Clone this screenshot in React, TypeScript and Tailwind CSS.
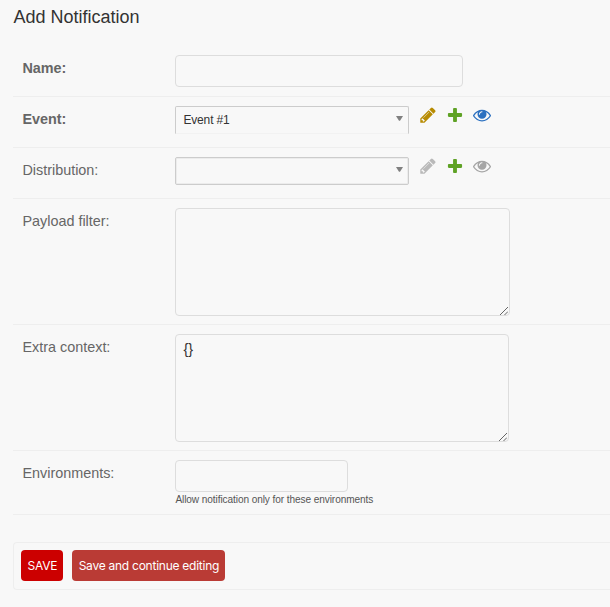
import type { ReactNode } from 'react';

const PENCIL =
  'M491 1536l91-91-235-235-91 91v107h128v128h107zm523-928q0-22-22-22-10 0-17 7l-542 542q-7 7-7 17 0 22 22 22 10 0 17-7l542-542q7-7 7-17zm-54-192l416 416-832 832h-416v-416zm683 96q0 53-37 90l-166 166-416-416 166-165q36-38 90-38 53 0 91 38l235 234q37 39 37 91z';
const PLUS =
  'M1600 796v192q0 40-28 68t-68 28h-416v416q0 40-28 68t-68 28h-192q-40 0-68-28t-28-68v-416h-416q-40 0-68-28t-28-68v-192q0-40 28-68t68-28h416v-416q0-40 28-68t68-28h192q40 0 68 28t28 68v416h416q40 0 68 28t28 68z';
const EYE =
  'M1664 960q-152-236-381-353 61 104 61 225 0 185-131.5 316.5t-316.5 131.5-316.5-131.5-131.5-316.5q0-121 61-225-229 117-381 353 133 205 333.5 326.5t434.5 121.5 434.5-121.5 333.5-326.5zm-720-384q0-20-14-34t-34-14q-125 0-214.5 89.5t-89.5 214.5q0 20 14 34t34 14 34-14 14-34q0-86 61-147t147-61q20 0 34-14t14-34zm848 384q0 34-20 69-140 230-376.5 368.5t-499.5 138.5-499.5-139-376.5-368q-20-35-20-69t20-69q140-229 376.5-368t499.5-139 499.5 139 376.5 368q20 35 20 69z';

function Icon({ d, className }: { d: string; className: string }) {
  return (
    <svg viewBox="0 0 1792 1792" className={`size-[18px] fill-current ${className}`}>
      <path d={d} />
    </svg>
  );
}

function Row({ label, bold, height, children }: { label: string; bold?: boolean; height: string; children: ReactNode }) {
  return (
    <div className={`flex items-start border-b border-[#eeeeee] pl-[9px] pt-[9px] ${height}`}>
      <div className={`w-[153px] shrink-0 pt-[3px] text-[14.4px] leading-[20px] text-[#666] ${bold ? 'font-bold' : ''}`}>{label}</div>
      {children}
    </div>
  );
}

function Select({ value, open }: { value: string; open?: boolean }) {
  return (
    <div
      className={`flex h-[28px] w-[234px] items-center justify-between border border-[#cccccc] px-[7px] text-[12px] tracking-[-0.15px] text-[#333] ${
        open ? 'rounded-t-[2px] border-b-[#f2f2f2]' : 'rounded-[2px] shadow-[inset_0_0_0_1px_#ececec]'
      }`}
    >
      <span>{value}</span>
      <svg viewBox="0 0 7 5" className="mb-[3px] -mr-[1.5px] h-[5px] w-[7px] fill-[#808080]">
        <path d="M0 0h7L4 4.8H3z" />
      </svg>
    </div>
  );
}

function Actions({ disabled }: { disabled?: boolean }) {
  return (
    <div className="ml-[9.6px] flex gap-[9px]">
      <Icon d={PENCIL} className={disabled ? 'text-[#b9b9b9]' : 'text-[#b78b02]'} />
      <Icon d={PLUS} className="text-[#5fa225]" />
      <Icon d={EYE} className={disabled ? 'text-[#a5a5a5]' : 'text-[#2b70c0]'} />
    </div>
  );
}

function TextArea({ className, value }: { className: string; value: string }) {
  return (
    <div className={`flex h-[108px] items-end justify-between rounded-[4px] border border-[#dddddd] ${className}`}>
      <span className="self-start pl-[7px] pt-[5px] text-[14.4px] leading-[18px] text-[#333]">{value}</span>
      <svg viewBox="0 0 8 8" className="mr-px size-[8px] stroke-[#666]" strokeWidth="1">
        <path d="M0 8L8 0M4.5 8L8 4.5" />
      </svg>
    </div>
  );
}

export default function App() {
  return (
    <div className="h-[607px] w-[610px] overflow-hidden bg-[#f8f8f8] pl-[13.4px] font-['Liberation_Sans',Arial,sans-serif]">
      <h1 className="h-[46px] pt-[7px] text-[18px] leading-[20px] text-[#333]">Add Notification</h1>
      <Row label="Name:" bold height="h-[51px]">
        <div className="h-[32px] w-[288px] rounded-[4px] border border-[#dddddd]" />
      </Row>
      <Row label="Event:" bold height="h-[51px]">
        <Select value="Event #1" open />
        <Actions />
      </Row>
      <Row label="Distribution:" height="h-[51px]">
        <Select value="" />
        <Actions disabled />
      </Row>
      <Row label="Payload filter:" height="h-[126px]">
        <TextArea className="w-[335px]" value="" />
      </Row>
      <Row label="Extra context:" height="h-[126px]">
        <TextArea className="w-[334px]" value="{}" />
      </Row>
      <Row label="Environments:" height="h-[64px]">
        <div>
          <div className="h-[32px] w-[173px] rounded-[4px] border border-[#dddddd]" />
          <p className="pt-px text-[10.1px] leading-[14px] tracking-[-0.09px] text-[#555]">Allow notification only for these environments</p>
        </div>
      </Row>
      <div className="mt-[27px] flex h-[48px] gap-[9px] rounded-l-[4px] border border-r-0 border-[#eeeeee] pl-[7px] pt-[7px] font-[Inter,sans-serif] text-[12px] tracking-[-0.25px] text-white">
        <button className="h-[31px] w-[42px] rounded-[4px] bg-[#cc0000]">SAVE</button>
        <button className="h-[31px] w-[153px] rounded-[4px] bg-[#ba3b35]">Save and continue editing</button>
      </div>
    </div>
  );
}
